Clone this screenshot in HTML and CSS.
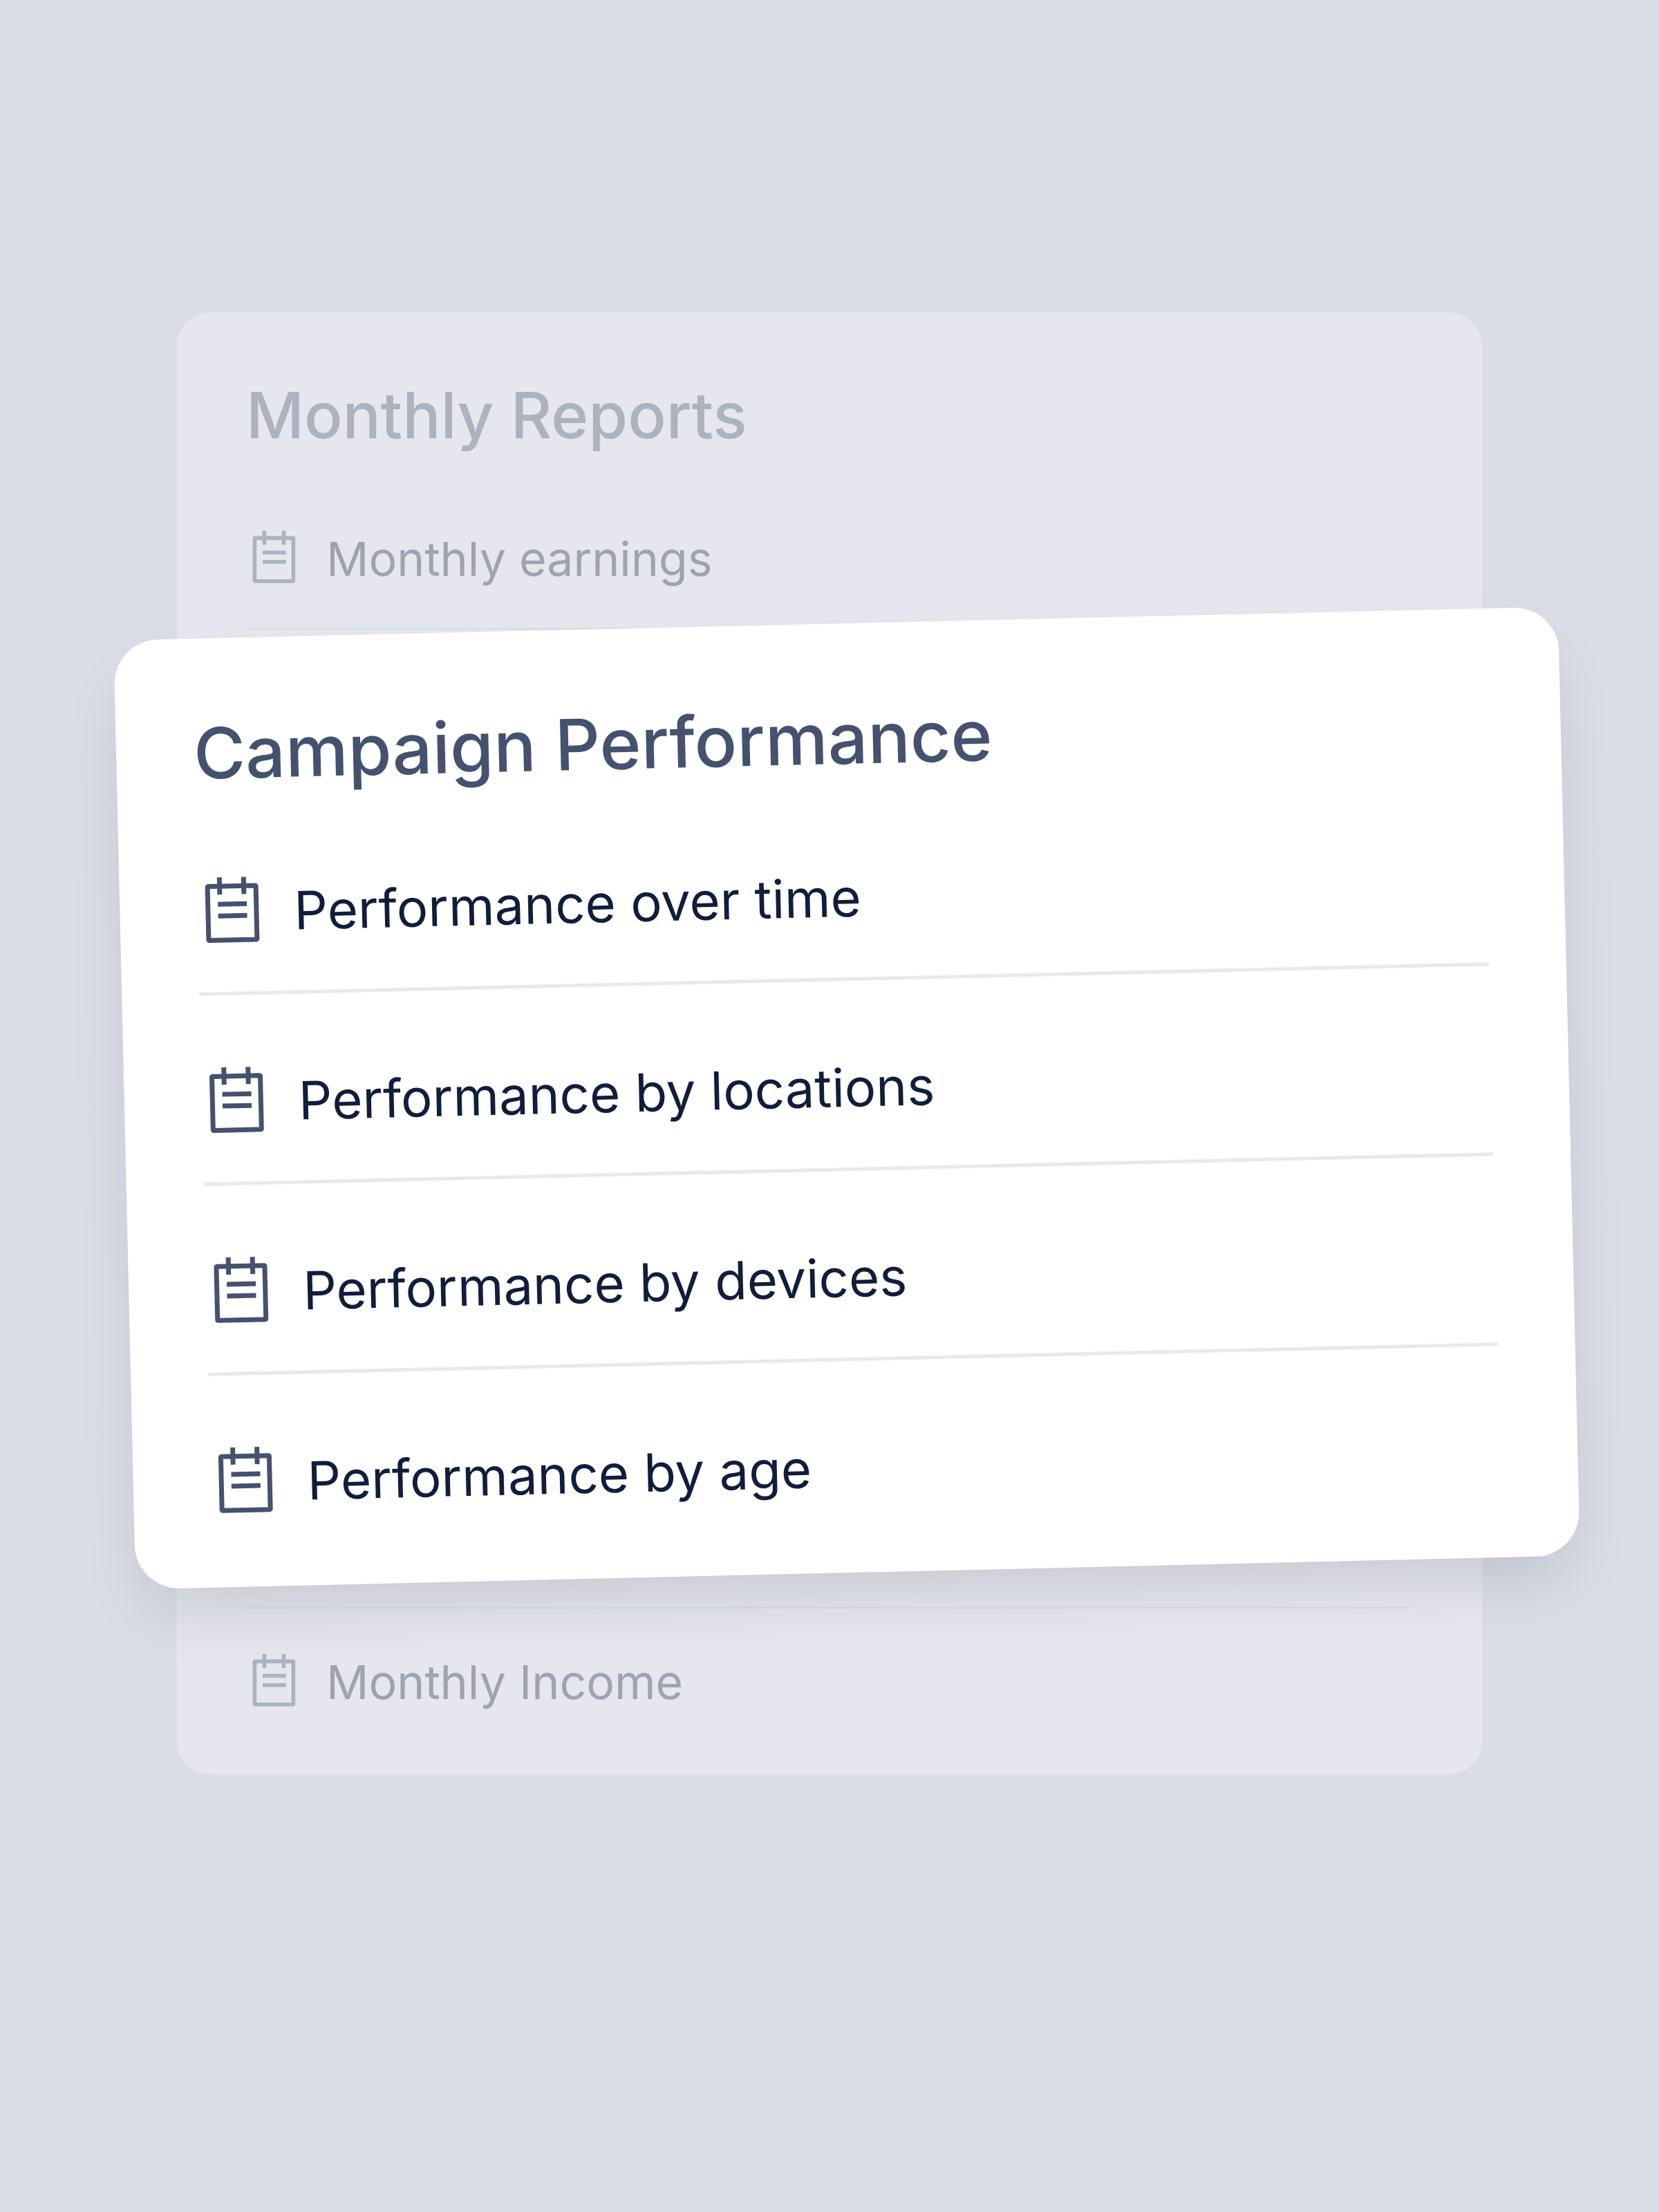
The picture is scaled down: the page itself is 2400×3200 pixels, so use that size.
FILE: index.html
```html
<!DOCTYPE html>
<html lang="en">
<head>
    <meta charset="UTF-8">
    <meta name="viewport" content="width=device-width, initial-scale=1.0">
    <title>Reports</title>
    <link rel="stylesheet" href="styles.css">
</head>
<body>
    <!-- notepad icon used by every row -->
    <svg width="0" height="0" class="sprite">
        <symbol id="notepad" viewBox="0 0 100 100">
            <rect x="15.5" y="13" width="70" height="78" rx="1" fill="none" stroke="currentColor" stroke-width="7" stroke-linejoin="round"/>
            <path d="M33 0v25M68 0v25M30 39h42M30 56h42" fill="none" stroke="currentColor" stroke-width="7"/>
        </symbol>
    </svg>

    <main class="stage">
        <section class="card card-back">
            <h2>Monthly Reports</h2>
            <ul>
                <li class="line-below"><svg class="icon"><use href="#notepad"/></svg><span>Monthly earnings</span></li>
                <li class="line-above"><svg class="icon"><use href="#notepad"/></svg><span>Monthly Income</span></li>
            </ul>
        </section>

        <section class="card card-front">
            <h2>Campaign Performance</h2>
            <ul>
                <li><svg class="icon"><use href="#notepad"/></svg><span>Performance over time</span></li>
                <li><svg class="icon"><use href="#notepad"/></svg><span>Performance by locations</span></li>
                <li><svg class="icon"><use href="#notepad"/></svg><span>Performance by devices</span></li>
                <li><svg class="icon"><use href="#notepad"/></svg><span>Performance by age</span></li>
            </ul>
        </section>
    </main>
</body>
</html>
```
FILE: styles.css
```css
* {
    box-sizing: border-box;
}

body {
    margin: 0;
    min-height: 100vh;
    padding: 452px 256px;
    font-family: Inter, "Liberation Sans", sans-serif;
    background-color: #dadde6;
}

h2 {
    margin: 0;
    font-weight: 500;
}

ul {
    list-style: none;
    margin: 0;
    padding: 0;
}

li {
    display: flex;
    align-items: center;
}

.sprite {
    position: absolute;
}

.icon {
    flex: none;
}

.stage {
    position: relative;
}

/* faded card behind */
.card-back {
    display: flex;
    flex-direction: column;
    min-height: 2115px;
    padding: 94px 100px;
    border-radius: 48px;
    background-color: #e5e6ee;
    color: #9fa3b0;
}

.card-back h2 {
    margin-bottom: 112px;
    font-size: 92px;
    line-height: 110px;
    color: #adb2bf;
}

.card-back ul {
    flex: 1;
    display: flex;
    flex-direction: column;
    justify-content: space-between;
}

.card-back li {
    gap: 36px;
    font-size: 68px;
    line-height: 80px;
}

.card-back .icon {
    width: 80px;
    height: 80px;
    color: #adb2bf;
}

.line-below {
    padding-bottom: 60px;
    border-bottom: 3px solid #dddfe6;
}

.line-above {
    padding-top: 66px;
    border-top: 3px solid #dddfe6;
}

/* tilted card on top */
.card-front {
    position: absolute;
    top: 450px;
    left: -76px;
    right: -126px;
    padding: 106px 112px 102px;
    border-radius: 64px;
    background-color: #fff;
    color: #101e3c;
    box-shadow: 0 48px 96px -24px rgba(16, 20, 30, 0.15);
    transform: rotate(-1.34deg);
}

.card-front h2 {
    margin-bottom: 16px;
    font-size: 102px;
    line-height: 120px;
    color: #44526f;
}

.card-front li {
    gap: 40px;
    padding: 104px 0 66px;
    border-bottom: 5px solid #e8e9ec;
    font-size: 76px;
    line-height: 100px;
}

.card-front li:last-child {
    padding-bottom: 0;
    border-bottom: 0;
}

.card-front .icon {
    width: 100px;
    height: 100px;
    color: #44526f;
}
```
